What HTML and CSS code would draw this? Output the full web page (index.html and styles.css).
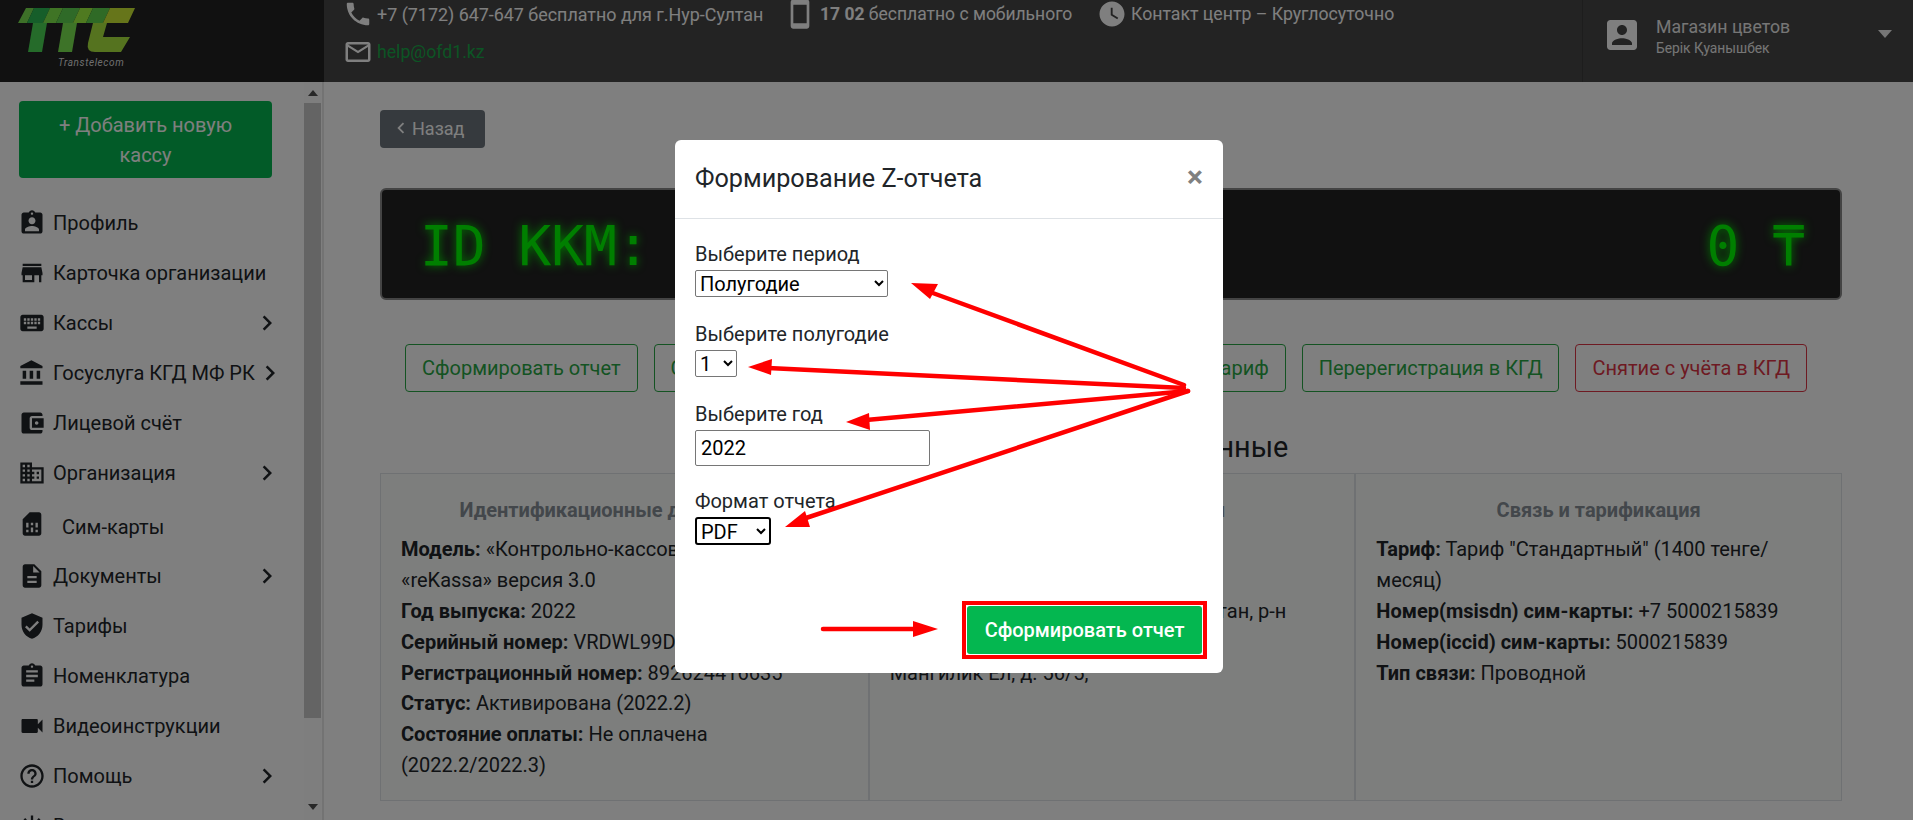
FILE: index.html
```html
<!DOCTYPE html>
<html>
<head>
  <title>Касса</title>
  <link rel="stylesheet" href="styles.css">
</head>
<body>
  <header class="topbar">
    <div class="logo">
      <svg class="logo-mark" viewBox="0 0 140 48">
        <!-- top band, one slice per letter part -->
        <polygon fill="#7ae050" points="26,0 34,0 27,15 18,15"/>
        <polygon fill="#2cbc54" points="34,0 50,0 43,15 27,15"/>
        <polygon fill="#7ee84a" points="50,0 63,0 56,15 43,15"/>
        <polygon fill="#5ed450" points="63,0 80,0 73,15 56,15"/>
        <polygon fill="#9ef440" points="80,0 93,0 86,15 73,15"/>
        <polygon fill="#5ed44c" points="93,0 110,0 103,15 86,15"/>
        <polygon fill="#ccea34" points="110,0 135,0 128,15 103,15"/>
        <!-- stems of the two T and the C -->
        <polygon fill="#4ad654" points="33,15 47,15 42,44 28,44"/>
        <polygon fill="#7ae650" points="63,15 77,15 72,44 58,44"/>
        <path fill="#aae63e" d="M93 15H107L103 29H130L121 44H95Q86 44 88 35Z"/>
      </svg>
      <span class="logo-name">Transtelecom</span>
    </div>
    <div class="contacts">
      <div class="contact-row">
        <span class="contact contact-phone"><svg viewBox="0 0 24 24"><path d="M6.62 10.79c1.44 2.83 3.76 5.14 6.59 6.59l2.2-2.2c.27-.27.67-.36 1.02-.24 1.12.37 2.33.57 3.57.57.55 0 1 .45 1 1V20c0 .55-.45 1-1 1-9.39 0-17-7.61-17-17 0-.55.45-1 1-1h3.5c.55 0 1 .45 1 1 0 1.25.2 2.45.57 3.57.11.35.03.74-.25 1.02l-2.2 2.2z"/></svg>+7 (7172) 647-647 бесплатно для г.Нур-Султан</span>
        <span class="contact contact-mobile"><svg viewBox="0 0 24 24"><path d="M17 1.01L7 1c-1.1 0-2 .9-2 2v18c0 1.1.9 2 2 2h10c1.1 0 2-.9 2-2V3c0-1.1-.9-1.99-2-1.99zM17 19H7V5h10v14z"/></svg><span><b>17 02</b> бесплатно с мобильного</span></span>
        <span class="contact contact-clock"><svg viewBox="0 0 24 24"><path d="M12 2C6.5 2 2 6.5 2 12s4.5 10 10 10 10-4.5 10-10S17.500 2 12 2zm4.200 14.200L11 13V7h1.500v5.200l4.500 2.700-.8 1.300z"/></svg>Контакт центр – Круглосуточно</span>
      </div>
      <div class="contact-row">
        <span class="contact contact-mail"><svg viewBox="0 0 24 24"><path d="M20 4H4c-1.100 0-1.990.9-1.990 2L2 18c0 1.100.9 2 2 2h16c1.100 0 2-.9 2-2V6c0-1.100-.9-2-2-2zm0 14H4V8l8 5 8-5v10zm-8-7L4 6h16l-8 5z"/></svg><a href="#">help@ofd1.kz</a></span>
      </div>
    </div>
    <div class="user">
      <svg class="user-icon" viewBox="3 3 18 18"><path d="M3 5v14c0 1.100.89 2 2 2h14c1.100 0 2-.9 2-2V5c0-1.100-.9-2-2-2H5c-1.110 0-2 .9-2 2zm12 4c0 1.660-1.340 3-3 3s-3-1.340-3-3 1.340-3 3-3 3 1.340 3 3zm-9 8c0-2 4-3.100 6-3.100s6 1.100 6 3.100v1H6v-1z"/></svg>
      <div class="user-text">
        <div class="user-name">Магазин цветов</div>
        <div class="user-sub">Берік Қуанышбек</div>
      </div>
      <span class="caret"></span>
    </div>
  </header>

  <div class="layout">
    <aside class="sidebar">
      <div class="menu">
        <a class="add-btn" href="#">+ Добавить новую кассу</a>
        <a class="item" href="#"><svg viewBox="0 0 24 24"><path d="M19 3h-4.180C14.400 1.840 13.300 1 12 1c-1.300 0-2.400.84-2.820 2H5c-1.100 0-2 .9-2 2v14c0 1.100.9 2 2 2h14c1.100 0 2-.9 2-2V5c0-1.100-.9-2-2-2zm-7 0c.55 0 1 .45 1 1s-.45 1-1 1-1-.45-1-1 .45-1 1-1zm0 4c1.660 0 3 1.340 3 3s-1.340 3-3 3-3-1.340-3-3 1.340-3 3-3zm6 12H6v-1.400c0-2 4-3.100 6-3.100s6 1.100 6 3.100V19z"/></svg>Профиль</a>
        <a class="item" href="#"><svg viewBox="0 0 24 24"><path d="M20 4H4v2h16V4zm1 10v-2l-1-5H4l-1 5v2h1v6h10v-6h4v6h2v-6h1zm-9 4H6v-4h6v4z"/></svg>Карточка организации</a>
        <a class="item" href="#"><svg viewBox="0 0 24 24"><path d="M20 5H4c-1.100 0-1.990.9-1.990 2L2 17c0 1.100.9 2 2 2h16c1.100 0 2-.9 2-2V7c0-1.100-.9-2-2-2zm-9 3h2v2h-2V8zm0 3h2v2h-2v-2zM8 8h2v2H8V8zm0 3h2v2H8v-2zm-1 2H5v-2h2v2zm0-3H5V8h2v2zm9 7H8v-2h8v2zm0-4h-2v-2h2v2zm0-3h-2V8h2v2zm3 3h-2v-2h2v2zm0-3h-2V8h2v2z"/></svg>Кассы<svg class="chevron" viewBox="0 0 24 24"><path d="M10 6L8.590 7.410 13.170 12l-4.580 4.590L10 18l6-6z"/></svg></a>
        <a class="item" href="#"><svg viewBox="0 0 24 24"><path d="M4 10v7h3v-7H4zm6 0v7h3v-7h-3zM2 22h19v-3H2v3zm14-12v7h3v-7h-3zm-4.500-9L2 6v2h19V6l-9.500-5z"/></svg>Госуслуга КГД МФ РК<svg class="chevron" viewBox="0 0 24 24"><path d="M10 6L8.590 7.410 13.170 12l-4.580 4.590L10 18l6-6z"/></svg></a>
        <a class="item" href="#"><svg viewBox="0 0 24 24"><path d="M21 18v1c0 1.100-.9 2-2 2H5c-1.110 0-2-.9-2-2V5c0-1.100.89-2 2-2h14c1.100 0 2 .9 2 2v1h-9c-1.110 0-2 .9-2 2v8c0 1.100.89 2 2 2h9zm-9-2h10V8H12v8zm4-2.500c-.83 0-1.500-.67-1.500-1.500s.67-1.500 1.500-1.500 1.500.67 1.500 1.500-.67 1.500-1.500 1.500z"/></svg>Лицевой счёт</a>
        <a class="item" href="#"><svg viewBox="0 0 24 24"><path d="M12 7V3H2v18h20V7H12zM6 19H4v-2h2v2zm0-4H4v-2h2v2zm0-4H4V9h2v2zm0-4H4V5h2v2zm4 12H8v-2h2v2zm0-4H8v-2h2v2zm0-4H8V9h2v2zm0-4H8V5h2v2zm10 12h-8v-2h2v-2h-2v-2h2v-2h-2V9h8v10zm-2-8h-2v2h2v-2zm0 4h-2v2h2v-2z"/></svg>Организация<svg class="chevron" viewBox="0 0 24 24"><path d="M10 6L8.590 7.410 13.170 12l-4.580 4.590L10 18l6-6z"/></svg></a>
        <a class="item item-sim" href="#"><svg viewBox="0 0 24 24"><path d="M19.990 4c0-1.100-.89-2-1.990-2h-8L4 8v12c0 1.100.9 2 2 2h12c1.100 0 2-.9 2-2l-.01-16zM9 19H7v-2h2v2zm8 0h-2v-2h2v2zm-8-4H7v-4h2v4zm4 4h-2v-4h2v4zm0-6h-2v-2h2v2zm4 2h-2v-4h2v4z"/></svg>Сим-карты</a>
        <a class="item" href="#"><svg viewBox="0 0 24 24"><path d="M14 2H6c-1.100 0-1.990.9-1.990 2L4 20c0 1.100.89 2 1.990 2H18c1.100 0 2-.9 2-2V8l-6-6zm2 16H8v-2h8v2zm0-4H8v-2h8v2zm-3-5V3.500L18.500 9H13z"/></svg>Документы<svg class="chevron" viewBox="0 0 24 24"><path d="M10 6L8.590 7.410 13.170 12l-4.580 4.590L10 18l6-6z"/></svg></a>
        <a class="item" href="#"><svg viewBox="0 0 24 24"><path d="M12 1L3 5v6c0 5.550 3.840 10.740 9 12 5.160-1.260 9-6.450 9-12V5l-9-4zm-2 16l-4-4 1.410-1.410L10 14.170l6.590-6.590L18 9l-8 8z"/></svg>Тарифы</a>
        <a class="item" href="#"><svg viewBox="0 0 24 24"><path d="M19 3h-4.180C14.400 1.840 13.300 1 12 1c-1.300 0-2.400.84-2.820 2H5c-1.100 0-2 .9-2 2v14c0 1.100.9 2 2 2h14c1.100 0 2-.9 2-2V5c0-1.100-.9-2-2-2zm-7 0c.55 0 1 .45 1 1s-.45 1-1 1-1-.45-1-1 .45-1 1-1zm2 14H7v-2h7v2zm3-4H7v-2h10v2zm0-4H7V7h10v2z"/></svg>Номенклатура</a>
        <a class="item" href="#"><svg viewBox="0 0 24 24"><path d="M17 10.500V7c0-.55-.45-1-1-1H4c-.55 0-1 .45-1 1v10c0 .55.45 1 1 1h12c.55 0 1-.45 1-1v-3.500l4 4v-11l-4 4z"/></svg>Видеоинструкции</a>
        <a class="item" href="#"><svg viewBox="0 0 24 24"><path d="M11 18h2v-2h-2v2zm1-16C6.480 2 2 6.480 2 12s4.480 10 10 10 10-4.480 10-10S17.520 2 12 2zm0 18c-4.410 0-8-3.590-8-8s3.590-8 8-8 8 3.590 8 8-3.590 8-8 8zm0-14c-2.210 0-4 1.790-4 4h2c0-1.100.9-2 2-2s2 .9 2 2c0 2-3 1.750-3 5h2c0-2.250 3-2.500 3-5 0-2.210-1.790-4-4-4z"/></svg>Помощь<svg class="chevron" viewBox="0 0 24 24"><path d="M10 6L8.590 7.410 13.170 12l-4.580 4.590L10 18l6-6z"/></svg></a>
        <a class="item" href="#"><svg viewBox="0 0 24 24"><path d="M13 3h-2v10h2V3zm4.830 2.170l-1.420 1.420C17.990 7.860 19 9.810 19 12c0 3.870-3.130 7-7 7s-7-3.130-7-7c0-2.190 1.010-4.140 2.580-5.420L6.170 5.170C4.230 6.820 3 9.260 3 12c0 4.970 4.030 9 9 9s9-4.030 9-9c0-2.740-1.230-5.180-3.170-6.830z"/></svg>Выход</a>
      </div>
      <div class="scrollbar">
        <span class="scroll-up"></span>
        <div class="scroll-thumb"></div>
        <span class="scroll-down"></span>
      </div>
    </aside>

    <main class="content">
      <a class="back-btn" href="#"><svg viewBox="0 0 24 24"><path d="M15.410 7.410L14 6l-6 6 6 6 1.410-1.410L10.830 12z"/></svg>Назад</a>

      <div class="display">
        <span>ID KKM: 12845</span>
        <span>0 ₸</span>
      </div>

      <div class="actions">
        <a class="action" href="#">Сформировать отчет</a>
        <a class="action action-grow" href="#">Список чеков</a>
        <a class="action" href="#">Сменить тариф</a>
        <a class="action" href="#">Перерегистрация в КГД</a>
        <a class="action action-red" href="#">Снятие с учёта в КГД</a>
      </div>

      <h2 class="section-title">Регистрационные данные</h2>

      <div class="cards">
        <section class="card">
          <h3>Идентификационные данные ККМ</h3>
          <p><b>Модель:</b> «Контрольно-кассовая машина «reKassa» версия 3.0</p>
          <p><b>Год выпуска:</b> 2022</p>
          <p><b>Серийный номер:</b> VRDWL99D</p>
          <p><b>Регистрационный номер:</b> 892624416635</p>
          <p><b>Статус:</b> Активирована (2022.2)</p>
          <p><b>Состояние оплаты:</b> Не оплачена (2022.2/2022.3)</p>
        </section>
        <section class="card">
          <h3>Место установки кассы</h3>
          <p><b>Тип:</b> Магазин</p>
          <p><b>Название:</b> Магазин цветов</p>
          <p><b>Адрес:</b> 10000, Казахстан, г.Нур-Султан, р-н<br>Есиль, пр.<br>Мангилик Ел, д. 56/5,</p>
        </section>
        <section class="card">
          <h3>Связь и тарификация</h3>
          <p><b>Тариф:</b> Тариф "Стандартный" (1400 тенге/месяц)</p>
          <p><b>Номер(msisdn) сим-карты:</b> +7 5000215839</p>
          <p><b>Номер(iccid) сим-карты:</b> 5000215839</p>
          <p><b>Тип связи:</b> Проводной</p>
        </section>
      </div>
    </main>
  </div>

  <div class="backdrop">
    <div class="modal">
      <div class="modal-head">
        <h4>Формирование Z-отчета</h4>
        <span class="close">×</span>
      </div>
      <div class="modal-body">
        <label class="field-label">Выберите период</label>
        <select class="field-period"><option>Полугодие</option><option>День</option></select>
        <label class="field-label">Выберите полугодие</label>
        <select class="field-half"><option>1</option><option>2</option></select>
        <label class="field-label">Выберите год</label>
        <input class="field-year" type="text" value="2022">
        <label class="field-label">Формат отчета</label>
        <select class="field-format"><option>PDF</option><option>XLS</option></select>
      </div>
      <div class="modal-foot">
        <span class="mark"><button class="submit">Сформировать отчет</button></span>
      </div>
    </div>

    <!-- red arrows drawn over the screenshot -->
    <svg class="arrows" viewBox="0 0 1913 820">
      <g stroke="#f00" stroke-width="4.500" stroke-linecap="round">
        <line x1="1184" y1="385" x2="930" y2="292"/>
        <line x1="1184" y1="388" x2="768" y2="368"/>
        <line x1="1188" y1="391" x2="866" y2="420"/>
        <line x1="1188" y1="391" x2="803" y2="519"/>
        <line x1="823" y1="629" x2="915" y2="629"/>
      </g>
      <g fill="#f00">
        <polygon points="911,283 938,284 930,299"/>
        <polygon points="748,367 772,359 771,375"/>
        <polygon points="846,422 869,413 870,430"/>
        <polygon points="785,527 805,511 810,527"/>
        <polygon points="938,629 913,621 913,637"/>
      </g>
    </svg>
  </div>
</body>
</html>
```

FILE: styles.css
```css
* {
  box-sizing: border-box;
}

body {
  margin: 0;
  height: 100vh;
  overflow: hidden;
  font-family: Roboto, "Liberation Sans", sans-serif;
  font-size: 20px;
  color: #212529;
  background: #fff;
  display: flex;
  flex-direction: column;
}

a {
  color: inherit;
  text-decoration: none;
}

/* Top bar */
.topbar {
  height: 82px;
  flex: none;
  display: flex;
  background: #464646;
  color: #fff;
}

.logo {
  width: 324px;
  flex: none;
  background: #222;
  padding-top: 8px;
}

.logo-mark {
  display: block;
  width: 140px;
  height: 48px;
}

.logo-name {
  display: block;
  margin: 1px 0 0 58px;
  font-size: 10px;
  font-style: italic;
  letter-spacing: 0.6px;
  color: #ddd;
}

.contacts {
  flex: 1;
  padding-left: 19px;
}

.contact-row {
  display: flex;
  height: 37px;
  align-items: center;
}

.contact-row:first-child {
  height: 28px;
  margin-bottom: 5px;
}

.contact {
  display: flex;
  align-items: center;
  font-size: 17.7px;
}

.contact svg {
  width: 30px;
  height: 30px;
  fill: #fff;
  margin-right: 4px;
  flex: none;
}

.contact-phone {
  width: 447px;
  font-size: 17.900px;
}

.contact-mobile {
  width: 307px;
  font-size: 17.500px;
}

.contact-mobile svg {
  width: 32px;
  height: 32px;
  margin-right: 0;
  margin-left: -6px;
}

.contact-mobile span {
  margin-left: 4px;
}

.contact a {
  color: #19a949;
}

.user {
  width: 331px;
  flex: none;
  display: flex;
  align-items: flex-start;
  border-left: 1px solid #3a3a3a;
  padding: 20px 21px 0 24px;
}

.user-icon {
  width: 30px;
  height: 30px;
  fill: #fff;
  flex: none;
}

.user-text {
  margin-left: 19px;
  flex: 1;
}

.user-name {
  font-size: 17.7px;
  line-height: 14px;
  opacity: 0.9;
}

.user-sub {
  font-size: 13.8px;
  margin-top: 4px;
  line-height: 20px;
  opacity: 0.9;
}

.caret {
  margin-top: 10px;
  border: 7px solid transparent;
  border-top: 8px solid #fff;
  border-bottom: 0;
  opacity: 0.9;
}

/* Sidebar */
.layout {
  flex: 1;
  display: flex;
  min-height: 0;
}

.sidebar {
  width: 324px;
  flex: none;
  display: flex;
  border-right: 2px solid #e6e6e6;
}

.menu {
  width: 304px;
  flex: none;
  padding: 19px 0 0 19px;
  overflow: hidden;
}

.add-btn {
  display: block;
  width: 253px;
  height: 77px;
  padding: 9px 20px;
  background: #04b750;
  color: #fff;
  border-radius: 4px;
  text-align: center;
  line-height: 30px;
  margin-bottom: 20px;
}

.item {
  display: flex;
  align-items: center;
  height: 50px;
  width: 259px;
  white-space: nowrap;
}

.item svg {
  width: 28px;
  height: 28px;
  fill: #212529;
  margin: 0 7px 0 -1px;
  flex: none;
}

.item-sim {
  height: 53px;
  padding-top: 4px;
}

.item-sim svg {
  margin-right: 16px;
  margin-top: -6px;
}

.item .chevron {
  width: 30px;
  height: 30px;
  margin: 0 -4px 0 auto;
}

.scrollbar {
  width: 17px;
  flex: none;
  display: flex;
  flex-direction: column;
  align-items: center;
  background: #fdfdfd;
}

.scroll-up,
.scroll-down {
  flex: none;
  border: 5px solid transparent;
  width: 0;
  height: 0;
}

.scroll-up {
  border-bottom: 6px solid #505050;
  margin: 3px 0 7px;
}

.scroll-thumb {
  width: 100%;
  height: 615px;
  background: #c8c8c8;
  margin-bottom: auto;
}

.scroll-down {
  border-top: 6px solid #505050;
  margin-bottom: 5px;
}

/* Main content */
.content {
  flex: 1;
  min-width: 0;
  padding: 28px 71px 0 56px;
}

.back-btn {
  display: flex;
  align-items: center;
  width: 105px;
  height: 38px;
  padding: 0 0 2px 12px;
  background: #6c757d;
  color: #fff;
  border-radius: 4px;
  font-size: 18px;
}

.back-btn svg {
  width: 22px;
  height: 22px;
  fill: #fff;
  margin: 0 0 0 -2px;
}

.display {
  margin-top: 40px;
  height: 112px;
  display: flex;
  align-items: center;
  justify-content: space-between;
  padding: 4px 35px 0 38px;
  background: #222;
  border: 2px solid #888;
  border-radius: 6px;
  font-family: "DejaVu Sans Mono", "Liberation Mono", monospace;
  font-size: 54.500px;
  color: #0f0;
  text-shadow: 0 0 10px #0f0;
}

.actions {
  display: flex;
  gap: 16px;
  margin: 44px 0 0 25px;
  width: 1402px;
}

.action {
  display: flex;
  align-items: center;
  height: 48px;
  padding: 0 16px;
  border: 1px solid #28a745;
  border-radius: 4px;
  color: #28a745;
  white-space: nowrap;
}

.action-grow {
  flex: 1;
}

.action-red {
  border-color: #dc3545;
  color: #dc3545;
}

.section-title {
  margin: 36px 0 0;
  height: 45px;
  line-height: 38px;
  font-size: 28.800px;
  font-weight: 400;
  text-align: center;
}

.cards {
  display: grid;
  grid-template-columns: repeat(3, 1fr);
  height: 328px;
  border: 1px solid #dee2e6;
  background: #fafcfa;
}

.card {
  padding: 21px 20px 0;
  border-left: 2px solid #dee2e6;
  line-height: 30.900px;
}

.card:first-child {
  border-left: 0;
}

.card h3 {
  margin: 0 0 8px;
  font-size: 20px;
  text-align: center;
  color: #868e96;
}

.card p {
  margin: 0;
}

/* Modal */
.backdrop {
  position: fixed;
  inset: 0;
  background: rgba(0, 0, 0, 0.5);
  display: flex;
  justify-content: center;
  padding: 140px 15px 0 0;
}

.modal {
  width: 548px;
  height: 533px;
  background: #fff;
  border-radius: 6px;
  display: flex;
  flex-direction: column;
}

.modal-head {
  height: 79px;
  flex: none;
  display: flex;
  align-items: center;
  justify-content: space-between;
  padding: 0 20px 2px 20px;
  border-bottom: 1px solid #dee2e6;
}

.modal-head h4 {
  margin: 0;
  font-size: 25.200px;
  font-weight: 400;
}

.close {
  margin-top: -4px;
  font-size: 30px;
  font-weight: 700;
  color: #808080;
}

.modal-body {
  flex: 1;
  padding: 22px 20px 0;
}

.field-label {
  display: block;
  line-height: 26px;
  margin-bottom: 3px;
}

select,
input {
  display: block;
  font-family: inherit;
  font-size: 20px;
  color: #000;
  background: #fff;
  border: 1px solid #767676;
  border-radius: 2px;
  margin-bottom: 24px;
}

.field-period {
  width: 193px;
  height: 27px;
}

.field-half {
  width: 42px;
  height: 27px;
}

.field-year {
  width: 235px;
  height: 36px;
  padding: 0 5px;
  margin-bottom: 22px;
}

.field-format {
  width: 76px;
  height: 28px;
  border: 2px solid #000;
  border-radius: 3px;
}

.modal-foot {
  display: flex;
  justify-content: flex-end;
  padding: 0 16px 14px 0;
}

.mark {
  display: block;
  border: 4px solid #f00;
  padding: 1px;
}

.submit {
  display: block;
  width: 235px;
  height: 48px;
  border: 0;
  border-radius: 3px;
  background: #04b750;
  color: #fff;
  font-family: inherit;
  font-size: 20px;
  font-weight: 500;
}

.arrows {
  position: absolute;
  left: 0;
  top: 0;
  width: 1913px;
  height: 820px;
}
```
